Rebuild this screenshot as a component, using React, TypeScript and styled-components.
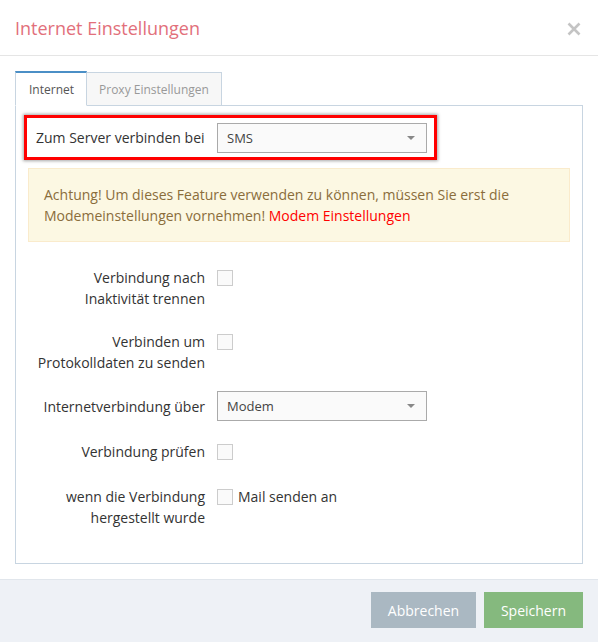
import React from 'react'
import styled, { createGlobalStyle } from 'styled-components'

const GlobalStyle = createGlobalStyle`
  html, body {
    margin: 0;
    padding: 0;
    background: #fff;
  }
  body {
    font-family: "Open Sans", "Noto Sans", "Liberation Sans", sans-serif;
    font-size: 14px;
    color: #333;
  }
  * {
    box-sizing: border-box;
  }
`

type Row = {
  label: string[]
  control: 'checkbox' | 'select'
  value?: string
  text?: string
  space: number
}

const rows: Row[] = [
  { label: ['Verbindung nach', 'Inaktivität trennen'], control: 'checkbox', space: 25 },
  { label: ['Verbinden um', 'Protokolldaten zu senden'], control: 'checkbox', space: 22 },
  { label: ['Internetverbindung über'], control: 'select', value: 'Modem', space: 18 },
  { label: ['Verbindung prüfen'], control: 'checkbox', space: 20 },
  { label: ['wenn die Verbindung', 'hergestellt wurde'], control: 'checkbox', text: 'Mail senden an', space: 24 },
]

const Select: React.FC<{ value: string }> = ({ value }) => (
  <StyledSelect>
    <span>{value}</span>
    <Caret />
  </StyledSelect>
)

const App: React.FC = () => {
  return (
    <Dialog>
      <GlobalStyle />
      <Header>
        <Title>Internet Einstellungen</Title>
        <Close aria-label="close">
          <svg width="14" height="14" viewBox="0 0 14 14">
            <path d="M1.5 1.5 L12.5 12.5 M12.5 1.5 L1.5 12.5" stroke="#c4c4c4" strokeWidth="2.6" />
          </svg>
        </Close>
      </Header>

      <Body>
        <Tabs>
          <Tab active>Internet</Tab>
          <Tab>Proxy Einstellungen</Tab>
        </Tabs>

        <Panel>
          <Highlight>
            <ServerLabel>Zum Server verbinden bei</ServerLabel>
            <Select value="SMS" />
          </Highlight>

          <Alert>
            Achtung! Um dieses Feature verwenden zu können, müssen Sie erst die
            Modemeinstellungen vornehmen! <a href="#">Modem Einstellungen</a>
          </Alert>

          {rows.map((row, i) => (
            <FormRow key={i} space={row.space} centered={row.control === 'select'}>
              <Label>
                {row.label.map((l) => (
                  <div key={l}>{l}</div>
                ))}
              </Label>
              {row.control === 'select' ? (
                <Select value={row.value || ''} />
              ) : (
                <CheckLine>
                  <Checkbox />
                  {row.text && <CheckText>{row.text}</CheckText>}
                </CheckLine>
              )}
            </FormRow>
          ))}
        </Panel>
      </Body>

      <Footer>
        <Button className="cancel">Abbrechen</Button>
        <Button className="save">Speichern</Button>
      </Footer>
    </Dialog>
  )
}

const Dialog = styled.div`
  width: 598px;
  height: 642px;
  display: flex;
  flex-direction: column;
  background: #fff;
`

const Header = styled.div`
  height: 56px;
  display: flex;
  align-items: center;
  justify-content: space-between;
  padding: 0 17px 0 15px;
  border-bottom: 1px solid #e5e5e5;
`

const Title = styled.h4`
  margin: 0;
  font-size: 18px;
  font-weight: 400;
  color: #e2707b;
  line-height: 1;
`

const Close = styled.button`
  border: none;
  background: transparent;
  padding: 0;
  margin-top: 3px;
  cursor: pointer;
  display: flex;
`

const Body = styled.div`
  padding: 15px 15px 0;
  flex: 1;
`

const Tabs = styled.div`
  display: flex;
  align-items: flex-end;
  height: 35px;
  position: relative;
  z-index: 1;
`

const Tab = styled.div<{ active?: boolean }>`
  height: ${(p) => (p.active ? '35px' : '34px')};
  padding: ${(p) => (p.active ? '0 12px 0 13px' : '0 12px')};
  font-size: 12px;
  display: flex;
  align-items: center;
  border: 1px solid #c8d5e1;
  border-top: ${(p) => (p.active ? '2px solid #4b8fc6' : '1px solid #c8d5e1')};
  border-bottom: ${(p) => (p.active ? '1px solid #fff' : '1px solid #c8d5e1')};
  background: ${(p) => (p.active ? '#fff' : '#f7f7f7')};
  color: ${(p) => (p.active ? '#555' : '#999')};
  & + & {
    border-left: none;
  }
`

const Panel = styled.div`
  margin-top: -1px;
  height: 459px;
  border: 1px solid #c8d5e1;
  padding: 9px 12px 0 8px;
`

const Highlight = styled.div`
  width: 413px;
  height: 45px;
  border: 3px solid #ff0000;
  box-shadow: 0 0 3px 1px rgba(0, 0, 0, 0.35);
  display: flex;
  align-items: center;
  padding: 0 0 0 9px;
  gap: 12px;
`

const ServerLabel = styled.span`
  font-size: 14px;
  color: #333;
  width: 169px;
`

const StyledSelect = styled.div`
  width: 210px;
  height: 30px;
  border: 1px solid #aaa;
  background: #fafafa;
  display: flex;
  align-items: center;
  justify-content: space-between;
  padding: 0 11px 0 9px;
  font-size: 13px;
  color: #444;
`

const Caret = styled.span`
  width: 0;
  height: 0;
  border-left: 4px solid transparent;
  border-right: 4px solid transparent;
  border-top: 4px solid #888;
`

const Alert = styled.div`
  margin: 8px 0 0 4px;
  padding: 15px 15px;
  background: #fcf8e3;
  border: 1px solid #faebcc;
  color: #8a6d3b;
  font-size: 14px;
  line-height: 21px;
  a {
    color: #f00;
    text-decoration: none;
  }
`

const FormRow = styled.div<{ space: number; centered?: boolean }>`
  margin-top: ${(p) => p.space}px;
  display: grid;
  grid-template-columns: 181px 1fr;
  column-gap: 12px;
  align-items: ${(p) => (p.centered ? 'center' : 'start')};
`

const Label = styled.div`
  text-align: right;
  font-size: 14px;
  line-height: 21px;
  color: #333;
`

const CheckLine = styled.div`
  display: flex;
  align-items: center;
  height: 21px;
  gap: 5px;
`

const Checkbox = styled.span`
  width: 16px;
  height: 16px;
  border: 1px solid #ccc;
  background: #fafafa;
  display: inline-block;
`

const CheckText = styled.span`
  font-size: 14px;
  color: #333;
`

const Footer = styled.div`
  height: 63px;
  background: #eef1f6;
  border-top: 1px solid #e1e6ec;
  display: flex;
  justify-content: flex-end;
  align-items: flex-start;
  padding: 12px 15px 0;
  gap: 8px;
`

const Button = styled.button`
  height: 36px;
  border: none;
  font-family: inherit;
  font-size: 14px;
  color: #fff;
  cursor: pointer;
  &.cancel {
    width: 105px;
    background: #aab8c2;
  }
  &.save {
    width: 99px;
    background: #85b97e;
  }
`

export default App
